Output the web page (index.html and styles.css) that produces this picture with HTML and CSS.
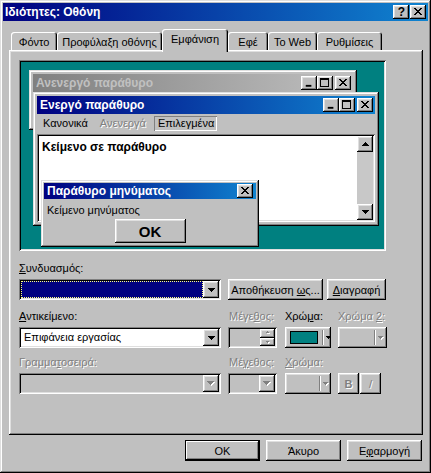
FILE: index.html
```html
<!DOCTYPE html>
<html lang="el">
<head>
    <meta charset="UTF-8">
    <title>Ιδιότητες: Οθόνη</title>
    <link rel="stylesheet" href="styles.css">
</head>
<body>
    <div class="window">
        <div class="titlebar">
            <span class="title">Ιδιότητες: Οθόνη</span>
            <div class="title-btns">
                <span class="tbtn help">?</span>
                <span class="tbtn">
                    <svg width="16" height="14" viewBox="0 0 16 14"><path d="M4 3h2v1H4zM10 3h2v1h-2zM5 4h2v1H5zM9 4h2v1H9zM6 5h4v1H6zM7 6h2v1H7zM6 7h4v1H6zM5 8h2v1H5zM9 8h2v1H9zM4 9h2v1H4zM10 9h2v1h-2z"/></svg>
                </span>
            </div>
        </div>

        <div class="content">
            <div class="tabs">
                <div class="tab w-fonto">Φόντο</div>
                <div class="tab w-prof">Προφύλαξη οθόνης</div>
                <div class="tab selected w-emf">Εμφάνιση</div>
                <div class="tab w-efe">Εφέ</div>
                <div class="tab w-web">Το Web</div>
                <div class="tab w-ryth">Ρυθμίσεις</div>
            </div>

            <div class="panel">
                <div class="preview">
                    <div class="pwin inactive">
                        <div class="caption caption-off">
                            <span>Ανενεργό παράθυρο</span>
                            <div class="cap-btns">
                                <span class="tbtn"><svg width="16" height="14" viewBox="0 0 16 14"><path d="M4 9h6v2H4z"/></svg></span>
                                <span class="tbtn"><svg width="16" height="14" viewBox="0 0 16 14"><path fill-rule="evenodd" d="M3 2h9v9H3zM4 4v6h7V4z"/></svg></span>
                                <span class="tbtn gap"><svg width="16" height="14" viewBox="0 0 16 14"><path d="M4 3h2v1H4zM10 3h2v1h-2zM5 4h2v1H5zM9 4h2v1H9zM6 5h4v1H6zM7 6h2v1H7zM6 7h4v1H6zM5 8h2v1H5zM9 8h2v1H9zM4 9h2v1H4zM10 9h2v1h-2z"/></svg></span>
                            </div>
                        </div>
                    </div>

                    <div class="pwin active">
                        <div class="caption">
                            <span>Ενεργό παράθυρο</span>
                            <div class="cap-btns">
                                <span class="tbtn"><svg width="16" height="14" viewBox="0 0 16 14"><path d="M4 9h6v2H4z"/></svg></span>
                                <span class="tbtn"><svg width="16" height="14" viewBox="0 0 16 14"><path fill-rule="evenodd" d="M3 2h9v9H3zM4 4v6h7V4z"/></svg></span>
                                <span class="tbtn gap"><svg width="16" height="14" viewBox="0 0 16 14"><path d="M4 3h2v1H4zM10 3h2v1h-2zM5 4h2v1H5zM9 4h2v1H9zM6 5h4v1H6zM7 6h2v1H7zM6 7h4v1H6zM5 8h2v1H5zM9 8h2v1H9zM4 9h2v1H4zM10 9h2v1h-2z"/></svg></span>
                            </div>
                        </div>
                        <div class="menubar">
                            <span class="menu-item">Κανονικά</span>
                            <span class="menu-item disabled">Ανενεργά</span>
                            <span class="menu-item picked">Επιλεγμένα</span>
                        </div>
                        <div class="textbox">
                            <div class="textbox-body">Κείμενο σε παράθυρο</div>
                            <div class="scrollbar">
                                <span class="sbtn"><svg width="7" height="4" viewBox="0 0 7 4"><path d="M3 0h1v1H3zM2 1h3v1H2zM1 2h5v1H1zM0 3h7v1H0z"/></svg></span>
                                <span class="strack"></span>
                                <span class="sbtn"><svg width="7" height="4" viewBox="0 0 7 4"><path d="M0 0h7v1H0zM1 1h5v1H1zM2 2h3v1H2zM3 3h1v1H3z"/></svg></span>
                            </div>
                        </div>
                    </div>

                    <div class="msgbox">
                        <div class="caption caption-msg">
                            <span>Παράθυρο μηνύματος</span>
                            <span class="tbtn"><svg width="16" height="14" viewBox="0 0 16 14"><path d="M4 3h2v1H4zM10 3h2v1h-2zM5 4h2v1H5zM9 4h2v1H9zM6 5h4v1H6zM7 6h2v1H7zM6 7h4v1H6zM5 8h2v1H5zM9 8h2v1H9zM4 9h2v1H4zM10 9h2v1h-2z"/></svg></span>
                        </div>
                        <div class="msg-text">Κείμενο μηνύματος</div>
                        <div class="msg-actions">
                            <span class="button msg-ok">OK</span>
                        </div>
                    </div>
                </div>

                <div class="section scheme">
                    <div class="label"><u>Σ</u>υνδυασμός:</div>
                    <div class="scheme-row">
                        <div class="combo wide">
                            <div class="combo-val focus"></div>
                            <span class="drop"><svg width="7" height="4" viewBox="0 0 7 4"><path d="M0 0h7v1H0zM1 1h5v1H1zM2 2h3v1H2zM3 3h1v1H3z"/></svg></span>
                        </div>
                        <span class="button save-btn"><span>Αποθήκευση <u>ω</u>ς...</span></span>
                        <span class="button del-btn"><span><u>Δ</u>ιαγραφή</span></span>
                    </div>
                </div>

                <div class="section grid item-grid">
                    <div class="label"><u>Α</u>ντικείμενο:</div>
                    <div class="label off">Μέγε<u>θ</u>ος:</div>
                    <div class="label">Χρώ<u>μ</u>α:</div>
                    <div class="label off">Χρώμα <u>2</u>:</div>

                    <div class="combo wide">
                        <div class="combo-val">Επιφάνεια εργασίας</div>
                        <span class="drop"><svg width="7" height="4" viewBox="0 0 7 4"><path d="M0 0h7v1H0zM1 1h5v1H1zM2 2h3v1H2zM3 3h1v1H3z"/></svg></span>
                    </div>
                    <div class="combo spin off">
                        <div class="combo-val"></div>
                        <div class="spin-btns">
                            <span class="spin-btn"><svg width="6" height="4" viewBox="0 0 6 4"><path fill="#fff" d="M3 1h1v1H3zM2 2h3v1H2z"/><path fill="#808080" d="M2 0h1v1H2zM1 1h3v1H1z"/></svg></span>
                            <span class="spin-btn"><svg width="6" height="4" viewBox="0 0 6 4"><path fill="#fff" d="M2 2h3v1H2zM3 3h1v1H3z"/><path fill="#808080" d="M1 1h3v1H1zM2 2h1v1H2z"/></svg></span>
                        </div>
                    </div>
                    <div class="colorbtn">
                        <span class="swatch"></span>
                        <span class="sep"></span>
                        <svg class="carrow" width="5" height="3" viewBox="0 0 5 3"><path d="M0 0h5v1H0zM1 1h3v1H1zM2 2h1v1H2z"/></svg>
                    </div>
                    <div class="colorbtn off c2">
                        <span class="sep"></span>
                        <svg class="carrow" width="6" height="4" viewBox="0 0 6 4"><path fill="#fff" d="M1 1h5v1H1zM2 2h3v1H2zM3 3h1v1H3z"/><path fill="#808080" d="M0 0h5v1H0zM1 1h3v1H1zM2 2h1v1H2z"/></svg>
                    </div>
                </div>

                <div class="section grid font-grid">
                    <div class="label off">Γραμμα<u>τ</u>οσειρά:</div>
                    <div class="label off">Μέ<u>γ</u>εθος:</div>
                    <div class="label off"><u>Χ</u>ρώμα:</div>
                    <div></div>

                    <div class="combo wide off">
                        <div class="combo-val"></div>
                        <span class="drop"><svg width="8" height="5" viewBox="0 0 8 5"><path fill="#fff" d="M1 1h7v1H1zM2 2h5v1H2zM3 3h3v1H3zM4 4h1v1H4z"/><path fill="#808080" d="M0 0h7v1H0zM1 1h5v1H1zM2 2h3v1H2zM3 3h1v1H3z"/></svg></span>
                    </div>
                    <div class="combo small off">
                        <div class="combo-val"></div>
                        <span class="drop"><svg width="8" height="5" viewBox="0 0 8 5"><path fill="#fff" d="M1 1h7v1H1zM2 2h5v1H2zM3 3h3v1H3zM4 4h1v1H4z"/><path fill="#808080" d="M0 0h7v1H0zM1 1h5v1H1zM2 2h3v1H2zM3 3h1v1H3z"/></svg></span>
                    </div>
                    <div class="colorbtn off c3">
                        <span class="sep"></span>
                        <svg class="carrow" width="6" height="4" viewBox="0 0 6 4"><path fill="#fff" d="M1 1h5v1H1zM2 2h3v1H2zM3 3h1v1H3z"/><path fill="#808080" d="M0 0h5v1H0zM1 1h3v1H1zM2 2h1v1H2z"/></svg>
                    </div>
                    <div class="style-btns">
                        <span class="button sq off bold">B</span>
                        <span class="button sq off">/</span>
                    </div>
                </div>
            </div>

            <div class="footer">
                <span class="button default">OK</span>
                <span class="button">Άκυρο</span>
                <span class="button"><span>Ε<u>φ</u>αρμογή</span></span>
            </div>
        </div>
    </div>
</body>
</html>
```

FILE: styles.css
```css
:root {
    --face: #c0c0c0;
    --light: #dfdfdf;
    --shadow: #808080;
    --navy: #000080;
    --teal: #008080;
    --raised: inset -1px -1px #000, inset 1px 1px #fff, inset -2px -2px #808080, inset 2px 2px #dfdfdf;
    --frame: inset -1px -1px #000, inset 1px 1px #dfdfdf, inset -2px -2px #808080, inset 2px 2px #fff;
    --sunken: inset 1px 1px #808080, inset -1px -1px #fff, inset 2px 2px #000, inset -2px -2px #dfdfdf;
}

* {
    margin: 0;
    padding: 0;
    box-sizing: border-box;
}

body {
    font-family: 'Liberation Sans', Arial, sans-serif;
    font-size: 11px;
    color: #000;
    background: var(--face);
    width: 431px;
    height: 473px;
    overflow: hidden;
}

u {
    text-decoration: underline;
    text-underline-offset: 1px;
}

.window {
    width: 431px;
    height: 473px;
    padding: 3px;
    background: var(--face);
    box-shadow: var(--frame);
}

/* title bars */
.titlebar,
.caption {
    height: 18px;
    display: flex;
    align-items: center;
    justify-content: space-between;
    padding: 0 2px;
    background: linear-gradient(90deg, #000080, #1084d0);
    color: #fff;
    font-weight: bold;
    white-space: nowrap;
}

.titlebar .title {
    font-size: 12px;
}

.title-btns,
.cap-btns {
    display: flex;
    gap: 1px;
}

.tbtn {
    width: 16px;
    height: 14px;
    display: flex;
    align-items: center;
    justify-content: center;
    background: var(--face);
    box-shadow: var(--raised);
    color: #000;
}

.tbtn svg {
    display: block;
}

.tbtn.help {
    font-size: 12px;
    font-weight: bold;
    line-height: 14px;
    padding-left: 1px;
}

.cap-btns {
    gap: 0;
}

.cap-btns .gap {
    margin-left: 2px;
}

.content {
    padding: 0 5px 0 6px;
}

/* tabs */
.tabs {
    display: flex;
    align-items: flex-end;
    height: 21px;
    margin-top: 8px;
    padding-left: 2px;
}

.tab {
    height: 18px;
    display: flex;
    align-items: center;
    justify-content: center;
    padding-top: 1px;
    background: var(--face);
    border-radius: 3px 3px 0 0;
    box-shadow: inset 1px 1px #fff, inset -1px 0 #000, inset -2px 0 #808080;
    white-space: nowrap;
}

.tab.selected {
    position: relative;
    z-index: 1;
    height: 23px;
    margin-bottom: -2px;
    padding-bottom: 5px;
}

.w-fonto { width: 46px; }
.w-prof { width: 105px; }
.w-emf { width: 66px; }
.w-efe { width: 40px; }
.w-web { width: 49px; }
.w-ryth { width: 65px; }

.panel {
    height: 385px;
    padding: 10px 0 0 10px;
    background: var(--face);
    box-shadow: var(--raised);
}

/* preview desktop */
.preview {
    position: relative;
    width: 367px;
    height: 191px;
    background: var(--teal);
    box-shadow: var(--sunken);
    overflow: hidden;
}

.pwin,
.msgbox {
    position: absolute;
    background: var(--face);
    box-shadow: var(--frame);
}

.pwin {
    padding: 4px;
}

.inactive {
    left: 10px;
    top: 10px;
    width: 328px;
    height: 60px;
}

.caption-off {
    background: linear-gradient(90deg, #808080, #c0c0c0);
    color: #c0c0c0;
}

.active {
    left: 14px;
    top: 32px;
    width: 346px;
    height: 134px;
}

.caption span:first-child {
    font-size: 12px;
    padding-left: 1px;
}

.menubar {
    height: 19px;
    display: flex;
    align-items: center;
}

.menu-item {
    padding: 0 6px;
    line-height: 15px;
}

.menu-item.disabled {
    color: var(--shadow);
    text-shadow: 1px 1px 0 #fff;
}

.menu-item.picked {
    margin-left: 2px;
    padding: 0 3px 0 4px;
    box-shadow: inset 1px 1px #808080, inset -1px -1px #fff;
}

.textbox {
    display: flex;
    height: 88px;
    margin-top: 1px;
    padding: 2px;
    background: #fff;
    box-shadow: var(--sunken);
}

.textbox-body {
    flex: 1;
    padding: 4px 0 0 3px;
    font-weight: bold;
    font-size: 12px;
}

.scrollbar {
    width: 16px;
    display: flex;
    flex-direction: column;
    background: var(--face);
}

.sbtn {
    height: 16px;
    display: flex;
    align-items: center;
    justify-content: center;
    background: var(--face);
    box-shadow: var(--raised);
}

.strack {
    flex: 1;
    background: #c8c8c8;
}

.msgbox {
    left: 22px;
    top: 120px;
    width: 218px;
    height: 67px;
    padding: 3px;
}

.caption-msg {
    height: 16px;
    padding-right: 3px;
}

.msg-text {
    padding: 4px 0 0 3px;
    line-height: 14px;
}

.msg-actions {
    display: flex;
    justify-content: center;
    margin-top: 2px;
}

.button.msg-ok {
    width: 71px;
    height: 24px;
    font-weight: bold;
    font-size: 15px;
}

/* buttons and fields */
.button {
    height: 21px;
    display: flex;
    align-items: center;
    justify-content: center;
    background: var(--face);
    box-shadow: var(--raised);
    white-space: nowrap;
}

.button.default {
    border: 1px solid #000;
    box-shadow: inset -1px -1px #000, inset 1px 1px #fff, inset -2px -2px #808080;
}

.off,
.button.off {
    color: var(--shadow);
    text-shadow: 1px 1px 0 #fff;
}

.section {
    margin-top: 11px;
}

.label {
    height: 13px;
    line-height: 13px;
    margin-bottom: 4px;
    white-space: nowrap;
}

.scheme-row {
    display: flex;
    gap: 4px;
}

.scheme-row .combo {
    margin-right: 3px;
}

.save-btn { width: 95px; }
.del-btn { width: 59px; }

.combo {
    height: 21px;
    display: flex;
    padding: 2px;
    background: #fff;
    box-shadow: var(--sunken);
}

.combo.wide { width: 202px; }
.combo.small,
.combo.spin { width: 49px; }

.combo.off {
    background: var(--face);
}

.combo-val {
    flex: 1;
    padding-left: 3px;
    line-height: 17px;
    white-space: nowrap;
}

.combo-val.focus {
    background: var(--navy);
    outline: 1px dotted #ffff7f;
    outline-offset: -1px;
}

.drop {
    width: 16px;
    height: 17px;
    display: flex;
    align-items: center;
    justify-content: center;
    background: var(--face);
    box-shadow: var(--raised);
}

.spin-btns {
    width: 15px;
    display: flex;
    flex-direction: column;
}

.spin-btn {
    flex: 1;
    display: flex;
    align-items: center;
    justify-content: center;
    box-shadow: var(--raised);
}

.grid {
    display: grid;
    grid-template-columns: 202px 50px 46px 49px;
    grid-template-rows: 13px 21px;
    column-gap: 7px;
    row-gap: 4px;
}

.grid .label {
    margin-bottom: 0;
}

.grid .label:nth-child(2) {
    padding-left: 1px;
}

.item-grid {
    margin-top: 10px;
}

.font-grid {
    margin-top: 8px;
}

.colorbtn {
    width: 46px;
    height: 21px;
    display: flex;
    align-items: center;
    background: var(--face);
    box-shadow: var(--raised);
}

.colorbtn.c2 { width: 49px; }

.swatch {
    width: 28px;
    height: 13px;
    margin-left: 5px;
    background: var(--teal);
    border: 1px solid #000;
}

.sep {
    width: 2px;
    height: 15px;
    margin-left: 4px;
    border-left: 1px solid var(--shadow);
    border-right: 1px solid #fff;
}

.colorbtn.c2 .sep { margin-left: 36px; }
.colorbtn.c3 .sep { margin-left: 34px; }

.carrow {
    margin-left: 2px;
}

.style-btns {
    display: flex;
    gap: 1px;
}

.button.sq {
    width: 21px;
}

.button.bold {
    font-weight: bold;
}

.footer {
    display: flex;
    justify-content: flex-end;
    gap: 6px;
    margin-top: 5px;
    padding-right: 1px;
}

.footer .button {
    width: 75px;
}
```
